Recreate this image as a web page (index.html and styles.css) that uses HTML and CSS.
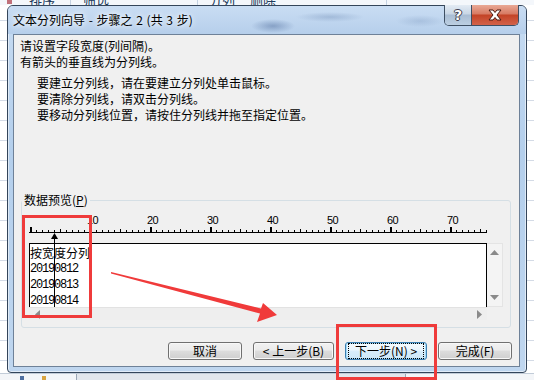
FILE: index.html
```html
<!DOCTYPE html>
<html lang="zh-CN">
<head>
  <meta charset="UTF-8">
  <title>文本分列向导 - 步骤之 2 (共 3 步)</title>
  <link rel="stylesheet" href="styles.css">
</head>
<body>
  <div class="ribbon">
    <span class="rb-icon"></span>
    <span class="rb-text rb1">排序</span>
    <span class="rb-sep"></span>
    <span class="rb-text rb2">筛选</span>
    <span class="rb-sep rb-sep2"></span>
    <span class="rb-text rb3">分列</span>
    <span class="rb-text rb4">删除</span>
    <span class="rb-sep rb-sep3"></span>
  </div>

  <div class="dialog">
    <div class="titlebar">
      <span class="title">文本分列向导 - 步骤之 2 (共 3 步)</span>
      <div class="caption-btns">
        <span class="cap-help">?</span>
        <span class="cap-close">
          <svg width="16" height="12" viewBox="0 0 16 12">
            <path d="M2 1h4l2 2.5 2-2.5h4l-4 5 4 5h-4l-2-2.5-2 2.5h-4l4-5z" fill="#fff" stroke="#4a1a12" stroke-width="1" stroke-linejoin="round"/>
          </svg>
        </span>
      </div>
    </div>

    <div class="content">
      <div class="intro">
        <p>请设置字段宽度(列间隔)。</p>
        <p>有箭头的垂直线为分列线。</p>
      </div>
      <div class="steps">
        <p>要建立分列线，请在要建立分列处单击鼠标。</p>
        <p>要清除分列线，请双击分列线。</p>
        <p>要移动分列线位置，请按住分列线并拖至指定位置。</p>
      </div>

      <fieldset class="preview-group">
        <legend>数据预览(<u>P</u>)</legend>
        <div class="ruler">
          <div class="ruler-labels">
            <span>10</span><span>20</span><span>30</span><span>40</span><span>50</span><span>60</span><span>70</span>
          </div>
          <div class="ruler-scale"></div>
        </div>
        <div class="preview">
          <div class="preview-box">
            <div class="row cjk">按宽度分列</div>
            <div class="row num">20190812</div>
            <div class="row num">20190813</div>
            <div class="row num">20190814</div>
          </div>
          <div class="vscroll">
            <svg width="9" height="5" viewBox="0 0 9 5"><polygon points="4.5,0 9,5 0,5" fill="#8a8a8a"/></svg>
            <svg width="9" height="5" viewBox="0 0 9 5"><polygon points="0,0 9,0 4.5,5" fill="#8a8a8a"/></svg>
          </div>
          <div class="hscroll">
            <svg width="5" height="9" viewBox="0 0 5 9"><polygon points="5,0 5,9 0,4.5" fill="#8a8a8a"/></svg>
            <svg width="5" height="9" viewBox="0 0 5 9"><polygon points="0,0 5,4.5 0,9" fill="#8a8a8a"/></svg>
          </div>
          <div class="corner"></div>
        </div>
      </fieldset>

      <div class="actions">
        <button class="btn btn-cancel">取消</button>
        <button class="btn btn-back">&lt; 上一步(<u>B</u>)</button>
        <button class="btn btn-next is-default"><span class="focus-ring">下一步(<u>N</u>) &gt;</span></button>
        <button class="btn btn-finish">完成(<u>F</u>)</button>
      </div>
    </div>
  </div>

  <div class="sheetbar">
    <span class="sheet-nav"></span>
    <span class="sheet-nav sheet-nav2"></span>
    <span class="sheet-tabs"></span>
  </div>

  <!-- annotations drawn over the screenshot -->
  <svg class="annot" width="534" height="380" viewBox="0 0 534 380">
    <line x1="54.5" y1="237" x2="54.5" y2="307" stroke="#000" stroke-width="1"/>
    <polygon points="54.5,233 51,239 58,239" fill="#000"/>
    <rect x="23.5" y="216.5" width="67" height="100" fill="none" stroke="#ef3b3b" stroke-width="3"/>
    <rect x="337.5" y="325.5" width="98" height="53" fill="none" stroke="#ef3b3b" stroke-width="3"/>
    <polygon points="111,272 261,308.5 263,303 277,315 257,322 260,313.5 111,273.5" fill="#f03a3a"/>
  </svg>
</body>
</html>
```

FILE: styles.css
```css
:root {
  --face: #f0f0f0;
  --frame: #bcd4ee;
  --red: #ef3b3b;
  --cjk: "Noto Sans CJK SC", "Noto Sans", sans-serif;
}
* {
  box-sizing: border-box;
}
body {
  margin: 0;
  width: 534px;
  height: 380px;
  overflow: hidden;
  position: relative;
  font-family: var(--cjk);
  font-size: 12px;
  color: #000;
  background: #fff repeating-linear-gradient(to bottom, transparent 0 19px, #d4dbe6 19px 20px);
  background-position: 0 1px;
}

/* excel ribbon peeking out above the dialog */
.ribbon {
  height: 5px;
  overflow: hidden;
  display: flex;
  align-items: flex-end;
  background: #f4f7fb;
}
.rb-text {
  flex: none;
  line-height: 14px;
  font-size: 13px;
  color: #203a5c;
  margin-bottom: -2px;
}
.rb-icon {
  flex: none;
  width: 5px;
  height: 4px;
  margin-left: 7px;
  background: #c0707a;
  align-self: flex-start;
}
.rb1 { margin-left: 17px; }
.rb2 { margin-left: 12px; }
.rb3 { margin-left: 11px; }
.rb4 { margin-left: 15px; }
.rb-sep {
  flex: none;
  width: 1px;
  height: 5px;
  margin-left: 15px;
  background: #c5d2e2;
}
.rb-sep2 { margin-left: 88px; }
.rb-sep3 { margin-left: 110px; }

/* dialog window */
.dialog {
  margin-left: 7px;
  width: 520px;
  height: 368px;
  padding: 0 6px 5px 5px;
  border: 1px solid #34455a;
  border-radius: 6px 6px 4px 4px;
  background: linear-gradient(to bottom, #c6dbf2, #b4cfec 40%, #bfd6ef);
  box-shadow: inset 0 0 0 1px rgba(255,255,255,0.55);
  display: flex;
  flex-direction: column;
}
.titlebar {
  height: 28px;
  display: flex;
  align-items: flex-start;
  margin: 0 -6px 0 -5px;
  padding-left: 5px;
  background:
    radial-gradient(ellipse 22px 7px at 265px 20px, rgba(70,100,150,0.45), transparent),
    radial-gradient(ellipse 34px 5px at 322px 11px, rgba(90,120,165,0.3), transparent),
    radial-gradient(ellipse 24px 6px at 412px 15px, rgba(90,120,165,0.22), transparent),
    linear-gradient(to bottom, #c9ddf3, #b6cfeb);
  border-radius: 5px 5px 0 0;
}
.title {
  flex: 1;
  line-height: 28px;
  font-size: 12px;
  word-spacing: 1px;
  text-shadow: 0 0 5px #fff, 0 0 8px #fff;
}
.caption-btns {
  display: flex;
  margin-top: -1px;
  margin-right: 7px;
  height: 21px;
  border: 1px solid #3e4f63;
  border-top: none;
  border-radius: 0 0 5px 5px;
  overflow: hidden;
}
.cap-help {
  width: 27px;
  display: flex;
  align-items: center;
  justify-content: center;
  font: bold 14px "DejaVu Sans", sans-serif;
  color: #fff;
  text-shadow: 0 0 1px #333, 1px 0 0 #445, -1px 0 0 #445, 0 1px 0 #445, 0 -1px 0 #445;
  background: linear-gradient(to bottom, #e3ebf4, #c8d6e5 45%, #a9bdd3 50%, #bccfe2);
  border-right: 1px solid #3e4f63;
}
.cap-close {
  width: 46px;
  display: flex;
  align-items: center;
  justify-content: center;
  background: linear-gradient(to bottom, #e9a996, #d77a63 45%, #c34326 50%, #d2624a);
}

/* dialog body */
.content {
  height: 333px;
  border: 1px solid #6e8198;
  background: var(--face);
}
p {
  margin: 0;
  line-height: 16px;
}
.intro {
  padding: 3px 0 0 6px;
}
.steps {
  margin: 5px 0 0 23px;
}

.preview-group {
  margin: 69px 0 0 7px;
  width: 490px;
  min-width: 0;
  padding: 0 0 7px 0;
  border: 1px solid #d5dfe5;
  border-radius: 3px;
}
.preview-group legend {
  margin-left: 0;
  padding: 0 2px;
  line-height: 16px;
}
.ruler {
  margin: 6px 0 0 7px;
  width: 458px;
}
.ruler-labels {
  display: flex;
  padding-left: 58px;
  height: 12px;
  font: 11px/12px "Liberation Sans", sans-serif;
  letter-spacing: -0.5px;
  color: #000;
}
.ruler-labels span {
  width: 60px;
  flex: none;
}
.ruler-scale {
  height: 7px;
  background:
    linear-gradient(#000, #000) left bottom / 100% 1px no-repeat,
    repeating-linear-gradient(90deg, transparent 0 1px, #000 1px 3px, transparent 3px 60px) left bottom / 100% 6px no-repeat,
    repeating-linear-gradient(90deg, transparent 0 1px, #000 1px 2px, transparent 2px 30px) left bottom / 100% 4px no-repeat,
    repeating-linear-gradient(90deg, transparent 0 1px, #000 1px 2px, transparent 2px 6px) left bottom / 100% 3px no-repeat;
}

.preview {
  margin: 10px 0 0 7px;
  display: grid;
  grid-template-columns: 458px 16px;
  grid-template-rows: 64px 13px;
}
.preview-box {
  background: #fff;
  border: 1px solid #000;
  border-bottom: none;
  padding: 1px 0 0 0;
  overflow: hidden;
}
.row {
  line-height: 16px;
  height: 16px;
  white-space: nowrap;
}
.row.num {
  font: 12px/16px "Liberation Mono", monospace;
  letter-spacing: -1.2px;
}
.vscroll {
  background: #f4f4f4;
  border: 1px solid #e4e4e4;
  border-left: none;
  display: flex;
  flex-direction: column;
  justify-content: space-between;
  align-items: center;
  padding: 6px 0 6px;
}
.hscroll {
  background: #eeeeee;
  border-top: 1px solid #e2e2e2;
  display: flex;
  justify-content: space-between;
  align-items: center;
  padding: 0 5px 0 6px;
}
.corner {
  background: var(--face);
}

/* wizard buttons */
.actions {
  margin-top: 14px;
  display: flex;
  justify-content: flex-end;
  gap: 11px;
  padding-right: 7px;
}
.btn {
  height: 18px;
  padding: 0;
  font: 12px/16px var(--cjk);
  color: #000;
  border: 1px solid #707070;
  border-radius: 3px;
  background: linear-gradient(to bottom, #f2f2f2, #ebebeb 45%, #dddddd 50%, #cfcfcf);
  box-shadow: inset 0 0 0 1px #f8f8f8;
}
.btn u {
  text-decoration: none;
}
.btn-cancel, .btn-finish { width: 74px; }
.btn-back { width: 81px; }
.btn-next { width: 82px; }
.btn.is-default {
  border-color: #3c7fb1;
  background: linear-gradient(to bottom, #f6fbfe, #e9f5fc 45%, #d8eefb 50%, #cde8f8);
  box-shadow: inset 0 0 0 1px #a6dcf8;
}
.focus-ring {
  display: block;
  margin: 1px 3px;
  line-height: 14px;
  outline: 1px dotted #000;
}

/* excel sheet tab bar below the dialog */
.sheetbar {
  height: 7px;
  background: #f3f5f8;
  border-top: 1px solid #c2ccd8;
  display: flex;
  align-items: flex-end;
}
.sheet-nav {
  width: 4px;
  height: 4px;
  margin-left: 20px;
  background: #4f6fa0;
}
.sheet-nav2 {
  margin-left: 18px;
  background: #d9a441;
}
.sheet-tabs {
  width: 330px;
  height: 6px;
  margin-left: 30px;
  background: #e2e6ec;
  border-left: 1px solid #9aa6b5;
  border-right: 1px solid #9aa6b5;
}

.annot {
  position: absolute;
  left: 0;
  top: 0;
  pointer-events: none;
}
```
